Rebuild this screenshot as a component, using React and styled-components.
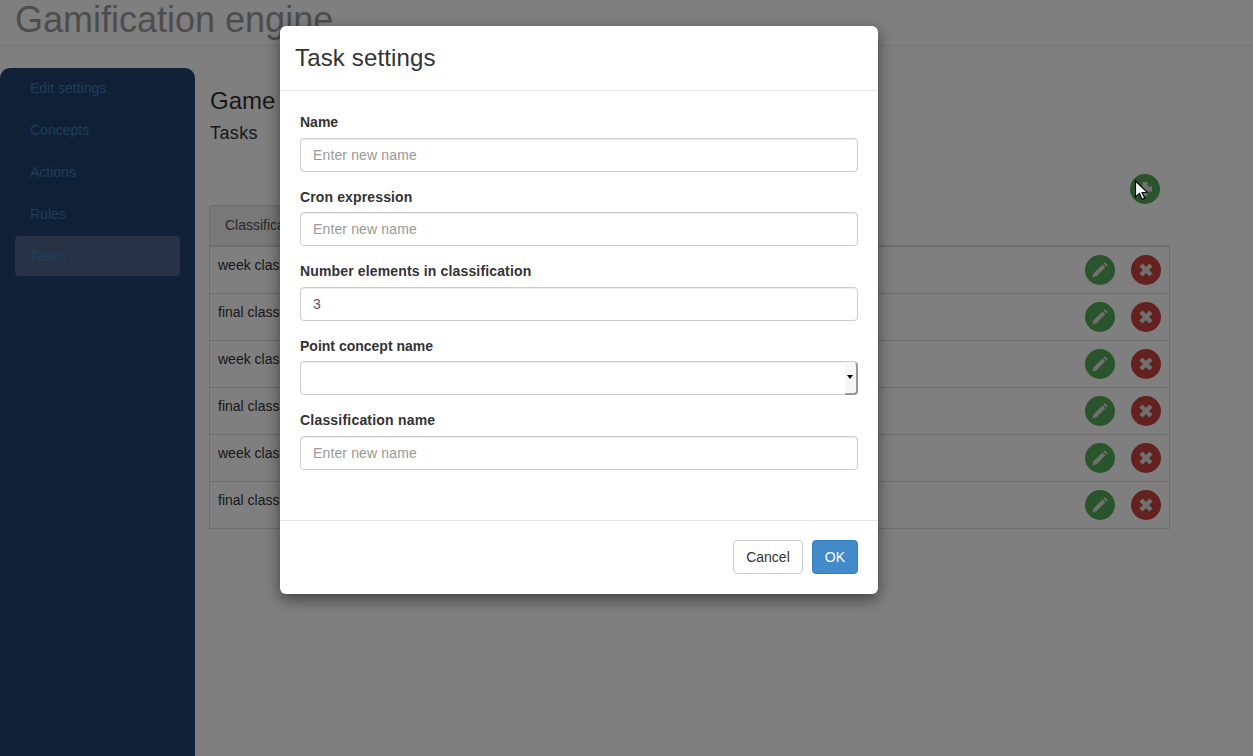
import React from "react";
import styled, { createGlobalStyle } from "styled-components";

const Global = createGlobalStyle`
  html, body { margin: 0; padding: 0; height: 100%; overflow: hidden; background: #fff; }
  body { font-family: "Liberation Sans", Arial, sans-serif; font-size: 14px; color: #333; line-height: 20px; }
  * { box-sizing: border-box; }
`;

const Page = styled.div`
  position: relative;
  width: 1253px;
  height: 756px;
  overflow: hidden;
`;
const Header = styled.header`
  height: 46px;
  border-bottom: 1px solid #eee;
  padding-left: 15px;
  overflow: hidden;
`;
const Brand = styled.h1`
  margin: 0;
  font-size: 36px;
  font-weight: 400;
  line-height: 40px;
  color: #9a9a9a;
`;
const Body = styled.div`
  display: flex;
  align-items: flex-start;
  margin-top: 22px;
`;
const Sidebar = styled.nav`
  flex: 0 0 195px;
  height: 688px;
  background: #21406f;
  border-radius: 10px 10px 0 0;
  padding: 0 15px;
  display: flex;
  flex-direction: column;
  gap: 2px;
`;
const NavItem = styled.a`
  display: block;
  height: 40px;
  padding: 10px 15px;
  border-radius: 4px;
  color: #3b7cb8;
  background: ${p => (p.$active ? "#4e6588" : "transparent")};
`;
const Main = styled.main`
  flex: 1;
  padding: 18px 83px 0 14px;
`;
const Title = styled.h2`
  margin: 0;
  padding-left: 1px;
  font-size: 24px;
  font-weight: 400;
  line-height: 30px;
`;
const Subtitle = styled.h3`
  margin: 7px 0 0;
  padding-left: 1px;
  font-size: 18px;
  font-weight: 400;
  line-height: 20px;
  letter-spacing: 0.4px;
`;
const Toolbar = styled.div`
  display: flex;
  justify-content: flex-end;
  padding-right: 10px;
  margin-top: 31px;
  height: 31px;
`;
const TabBar = styled.div`
  height: 42px;
  border-bottom: 2px solid #ddd;
`;
const Tab = styled.div`
  width: 200px;
  height: 40px;
  padding: 9px 15px;
  background: #f0f0f0;
  border: 1px solid #ddd;
  border-bottom: 0;
  border-radius: 4px 4px 0 0;
  color: #555;
`;
const Table = styled.div`
  border: 1px solid #ddd;
  border-top: 0;
`;
const Row = styled.div`
  height: ${p => (p.$last ? "46px" : "47px")};
  display: flex;
  justify-content: space-between;
  padding: 8px 8px 0;
  border-bottom: ${p => (p.$last ? "0" : "1px solid #ddd")};
`;
const Actions = styled.div`
  display: flex;
  gap: 16px;
`;
const Round = styled.button`
  width: 30px;
  height: 30px;
  border: 0;
  padding: 0;
  border-radius: 50%;
  display: flex;
  align-items: center;
  justify-content: center;
  background: ${p => (p.$danger ? "#c6443f" : "#55a856")};
`;

const Backdrop = styled.div`
  position: absolute;
  inset: 0;
  background: rgba(0, 0, 0, 0.5);
`;
const Modal = styled.section`
  position: absolute;
  left: 280px;
  top: 26px;
  width: 598px;
  height: 568px;
  background: #fff;
  border-radius: 6px;
  box-shadow: 0 5px 15px rgba(0, 0, 0, 0.5);
  display: flex;
  flex-direction: column;
`;
const ModalHead = styled.div`
  height: 65px;
  padding: 15px;
  border-bottom: 1px solid #e5e5e5;
`;
const ModalTitle = styled.h4`
  margin: 0;
  font-size: 24px;
  font-weight: 400;
  line-height: 33px;
  letter-spacing: 0.15px;
`;
const ModalBody = styled.form`
  flex: 1;
  padding: 20px 20px 0;
  display: flex;
  flex-direction: column;
`;
const Group = styled.div`
  height: 74.5px;
  flex: none;
`;
const Label = styled.label`
  display: block;
  font-weight: 700;
  line-height: 20px;
  height: 26.6px;
  padding-top: 1px;
  letter-spacing: ${p => p.$track || 0}px;
`;
const Input = styled.input`
  display: block;
  width: 100%;
  height: 34px;
  padding: 6px 12px;
  font: inherit;
  color: #555;
  background: #fff;
  border: 1px solid #ccc;
  border-radius: 4px;
  box-shadow: inset 0 1px 1px rgba(0, 0, 0, 0.075);
  &::placeholder { color: #999; opacity: 1; letter-spacing: 0.14px; }
`;
const SelectWrap = styled.div`
  position: relative;
  height: 34px;
  border: 1px solid #ccc;
  border-radius: 4px;
  box-shadow: inset 0 1px 1px rgba(0, 0, 0, 0.075);
`;
const Select = styled.select`
  appearance: none;
  display: block;
  width: 100%;
  height: 32px;
  border: 0;
  background: transparent;
`;
const SelectArrow = styled.span`
  position: absolute;
  right: -1px;
  top: 0;
  bottom: -1px;
  width: 13px;
  background: #f6f6f4;
  border-right: 2px solid #9a9a9a;
  border-bottom: 2px solid #9a9a9a;
  border-radius: 0 4px 4px 0;
  pointer-events: none;
  &::after {
    content: "";
    position: absolute;
    left: 2px;
    top: 13px;
    border: 3px solid transparent;
    border-top: 4px solid #000;
    border-bottom: 0;
  }
`;
const ModalFoot = styled.div`
  height: 74px;
  padding: 19px 20px 20px;
  border-top: 1px solid #e5e5e5;
  display: flex;
  justify-content: flex-end;
  gap: 9px;
`;
const Btn = styled.button`
  height: 34px;
  padding: 6px 12px;
  font: inherit;
  border-radius: 4px;
  border: 1px solid ${p => (p.$primary ? "#357ebd" : "#ccc")};
  background: ${p => (p.$primary ? "#428bca" : "#fff")};
  color: ${p => (p.$primary ? "#fff" : "#333")};
`;
const Cursor = styled.svg`
  position: absolute;
  left: 1134px;
  top: 180px;
`;

const Pencil = () => (
  <svg width="16" height="16" viewBox="0 0 16 16" fill="#e0e0e0">
    <path d="M.4 15.6l1.2-4.4 8.9-8.7 2.8 2.8-8.7 9z" />
    <path d="M11.5 1.6L13 .3l2.6 2.6-1.3 1.5z" />
  </svg>
);
const Cross = () => (
  <svg width="16" height="16" viewBox="0 0 16 16">
    <path d="M3 3l10 10M13 3L3 13" stroke="#e0e0e0" strokeWidth="4.4" />
  </svg>
);
const Plus = () => (
  <svg width="16" height="16" viewBox="0 0 16 16" fill="#e0e0e0">
    <path d="M5.5 1h5v4.5H15v5h-4.5V15h-5v-4.5H1v-5h4.5z" />
  </svg>
);

const rows = ["week classification", "final classification", "week classification", "final classification", "week classification", "final classification"];
const nav = ["Edit settings", "Concepts", "Actions", "Rules", "Tasks"];

export default function App() {
  return (
    <Page>
      <Global />
      <Header><Brand>Gamification engine</Brand></Header>
      <Body>
        <Sidebar>
          {nav.map(n => <NavItem key={n} $active={n === "Tasks"}>{n}</NavItem>)}
        </Sidebar>
        <Main>
          <Title>Game</Title>
          <Subtitle>Tasks</Subtitle>
          <Toolbar><Round type="button"><Plus /></Round></Toolbar>
          <TabBar><Tab>Classification</Tab></TabBar>
          <Table>
            {rows.map((r, i) => (
              <Row key={i} $last={i === rows.length - 1}>
                <span>{r}</span>
                <Actions>
                  <Round type="button"><Pencil /></Round>
                  <Round type="button" $danger><Cross /></Round>
                </Actions>
              </Row>
            ))}
          </Table>
        </Main>
      </Body>
      <Backdrop />
      <Modal>
        <ModalHead><ModalTitle>Task settings</ModalTitle></ModalHead>
        <ModalBody>
          <Group><Label>Name</Label><Input placeholder="Enter new name" /></Group>
          <Group><Label $track={0.13}>Cron expression</Label><Input placeholder="Enter new name" /></Group>
          <Group><Label $track={0.15}>Number elements in classification</Label><Input defaultValue="3" /></Group>
          <Group><Label>Point concept name</Label><SelectWrap><Select /><SelectArrow /></SelectWrap></Group>
          <Group><Label $track={0.2}>Classification name</Label><Input placeholder="Enter new name" /></Group>
        </ModalBody>
        <ModalFoot>
          <Btn type="button">Cancel</Btn>
          <Btn type="button" $primary>OK</Btn>
        </ModalFoot>
      </Modal>
      <Cursor width="14" height="22" viewBox="0 0 14 22">
        <path d="M1.5 1v16l4-3.6 2.6 6 2.6-1.1-2.6-5.8 5.2-.2z" fill="#fff" stroke="#000" strokeWidth="1.2" />
      </Cursor>
    </Page>
  );
}
